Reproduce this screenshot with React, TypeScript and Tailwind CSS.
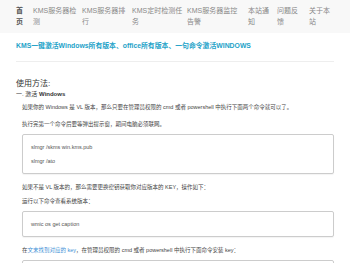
import React from 'react';

const FONT = { fontFamily: '"Liberation Sans", "Noto Sans CJK SC", sans-serif' };

// nav items: outer width reproduces where each label starts, content width makes it wrap
const NAV = [
    { label: ['首', '页'], w: 'w-[17px]', pr: 'pr-[9px]', bold: true },
    { label: ['KMS服务器检测'], w: 'w-[49px]', pr: 'pr-[4px]' },
    { label: ['KMS服务器排行'], w: 'w-[50px]', pr: 'pr-[5px]' },
    { label: ['KMS定时检测任务'], w: 'w-[55px]', pr: 'pr-[4px]' },
    { label: ['KMS服务器监控告警'], w: 'w-[61px]', pr: 'pr-[4px]' },
    { label: ['本站通知'], w: 'w-[29px]', pr: 'pr-[6px]' },
    { label: ['问题反馈'], w: 'w-[32px]', pr: 'pr-[9px]' },
    { label: ['关于本站'], w: 'w-[24px]', pr: 'pr-[1px]' },
];

export default function App() {
    return (
        <div className="w-[350px] h-[263px] overflow-hidden bg-white text-[#333]" style={FONT}>
            {/* Navbar */}
            <nav className="h-[33px] bg-[#f8f8f8] pl-[16px] pt-[5px] flex items-start">
                {NAV.map((n) => (
                    <div
                        key={n.label.join('')}
                        className={`${n.w} ${n.pr} shrink-0 text-[7px] leading-[11px] break-all ${
                            n.bold ? 'font-bold text-[#555]' : 'text-[#888]'
                        }`}
                    >
                        {n.label.map((part) => (
                            <div key={part}>{part}</div>
                        ))}
                    </div>
                ))}
            </nav>

            <div className="px-[16px]">
                {/* Title */}
                <div className="pt-[8px] pb-[10px] border-b border-[#eeeeee]">
                    <a className="block text-[6.85px] leading-[10px] font-bold text-[#23a2c8]">
                        KMS一键激活Windows所有版本、office所有版本、一句命令激活WINDOWS
                    </a>
                </div>

                <h2 className="mt-[16px] text-[8px] leading-[12px] text-[#333]">使用方法:</h2>
                <h3 className="text-[6px] leading-[8px] mb-[2px] text-[#333]">
                    一. 激活 <span className="font-bold">Windows</span>
                </h3>

                <div className="pl-[6px] text-[5.5px] leading-[14px] text-[#444]">
                    <p className="mb-[3px]">
                        如果你的 Windows 是 VL 版本，那么只要在管理员权限的 cmd 或者 powershell 中执行下面两个命令就可以了。
                    </p>
                    <p className="mb-[3px]">执行完第一个命令后要等弹出提示窗，期间电脑必须联网。</p>

                    <CodeBox lines={['slmgr /skms win.kms.pub', 'slmgr /ato']} />

                    <p>如果不是 VL 版本的，那么需要更换密钥获取你对应版本的 KEY，操作如下：</p>
                    <p className="mb-[3px]">运行以下命令查看系统版本：</p>

                    <CodeBox lines={['wmic os get caption']} />

                    <p className="mb-[3px]">
                        在<a className="text-[#3d8fd6]">文末找到对应的 key</a>，在管理员权限的 cmd 或者 powershell 中执行下面命令安装 key：
                    </p>

                    <CodeBox lines={['slmgr /ipk xxxxx-xxxxx-xxxxx-xxxxx-xxxxx']} />
                </div>
            </div>
        </div>
    );
}

function CodeBox({ lines }: { lines: string[] }) {
    return (
        <div className="mb-[6px] border border-[#cccccc] rounded-[2px] bg-white px-[8px] py-[5px] text-[#555] shadow-[0_1px_1px_rgba(0,0,0,0.05)]">
            {lines.map((l) => (
                <div key={l} className="leading-[14px]">
                    {l}
                </div>
            ))}
        </div>
    );
}
